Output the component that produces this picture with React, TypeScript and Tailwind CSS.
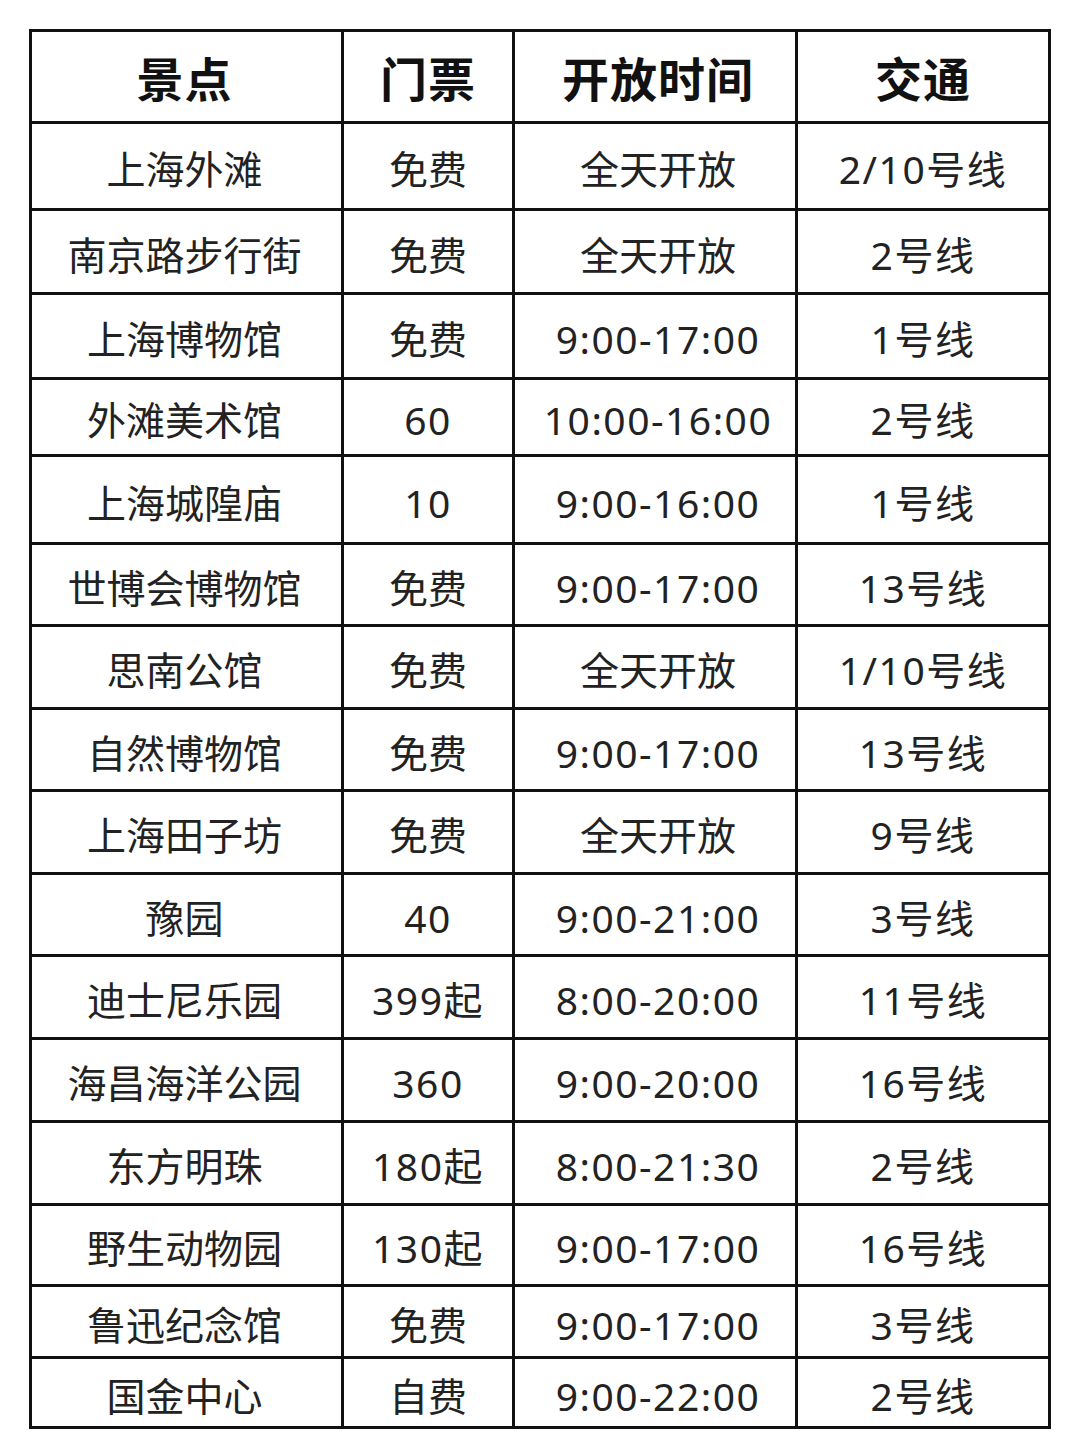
const rows: [string, string, string, string, number][] = [
  ["上海外滩", "免费", "全天开放", "2/10号线", 87],
  ["南京路步行街", "免费", "全天开放", "2号线", 84],
  ["上海博物馆", "免费", "9:00-17:00", "1号线", 85],
  ["外滩美术馆", "60", "10:00-16:00", "2号线", 77],
  ["上海城隍庙", "10", "9:00-16:00", "1号线", 88],
  ["世博会博物馆", "免费", "9:00-17:00", "13号线", 82],
  ["思南公馆", "免费", "全天开放", "1/10号线", 83],
  ["自然博物馆", "免费", "9:00-17:00", "13号线", 82],
  ["上海田子坊", "免费", "全天开放", "9号线", 83],
  ["豫园", "40", "9:00-21:00", "3号线", 82],
  ["迪士尼乐园", "399起", "8:00-20:00", "11号线", 83],
  ["海昌海洋公园", "360", "9:00-20:00", "16号线", 83],
  ["东方明珠", "180起", "8:00-21:30", "2号线", 83],
  ["野生动物园", "130起", "9:00-17:00", "16号线", 81],
  ["鲁迅纪念馆", "免费", "9:00-17:00", "3号线", 72],
  ["国金中心", "自费", "9:00-22:00", "2号线", 70],
];

const font = { fontFamily: '"Noto Sans", "Noto Sans CJK SC", sans-serif' };

function Cell({ value, head, className }: { value: string; head?: boolean; className: string }) {
  const text = head
    ? "text-[47px] font-bold text-[#111] tracking-[1px]"
    : /\d/.test(value)
      ? "text-[39px] text-[#222] tracking-[1.5px]"
      : "text-[39px] text-[#222]";
  return (
    <div className={`${className} flex items-center justify-center pt-[5px] ${text}`}>{value}</div>
  );
}

function Row({ cells, height, head }: { cells: string[]; height: number; head?: boolean }) {
  return (
    <div
      className={`flex ${head ? "" : "border-t-[3px] border-[#111]"}`}
      style={{ height }}
    >
      <Cell head={head} value={cells[0]} className="w-[309px] pr-[4px]" />
      <Cell head={head} value={cells[1]} className="w-[171px] border-l-[3px] border-[#111]" />
      <Cell head={head} value={cells[2]} className="w-[283px] pl-[6px] border-l-[3px] border-[#111]" />
      <Cell head={head} value={cells[3]} className="flex-1 border-l-[3px] border-[#111]" />
    </div>
  );
}

export default function App() {
  return (
    <div className="w-[1080px] h-[1443px] bg-white pt-[29px] pl-[29px]" style={font}>
      <div className="w-[1022px] border-[3px] border-[#111] leading-none">
        <Row head cells={["景点", "门票", "开放时间", "交通"]} height={89} />
        {rows.map((r) => (
          <Row key={r[0]} cells={r.slice(0, 4) as string[]} height={r[4]} />
        ))}
      </div>
    </div>
  );
}
